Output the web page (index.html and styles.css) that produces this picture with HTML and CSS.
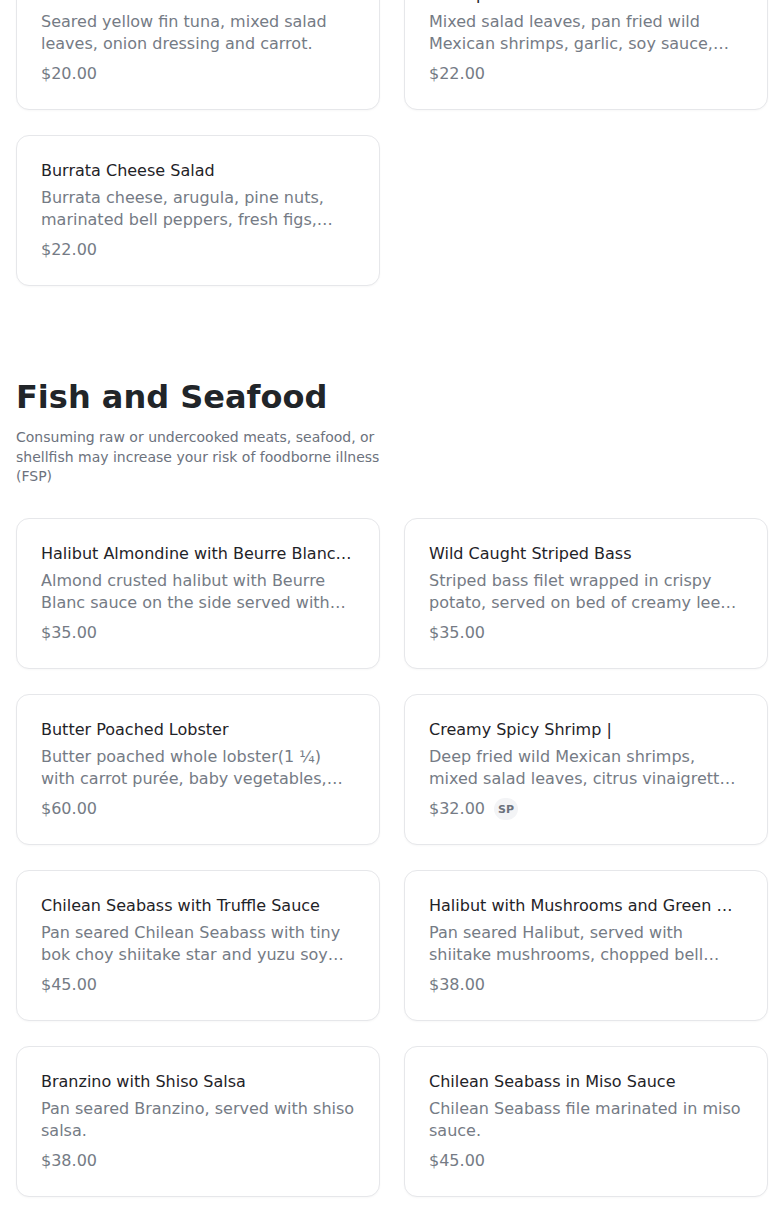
FILE: index.html
```html
<!DOCTYPE html>
<html lang="en">
<head>
<meta charset="utf-8">
<title>Menu</title>
<link rel="stylesheet" href="styles.css">
</head>
<body>
<main class="page">
  <section class="section section-salads">
    <div class="grid">
      <article class="card">
        <h3 class="card-title">Tuna Sashimi Salad</h3>
        <p class="card-desc">Seared yellow fin tuna, mixed salad leaves, onion dressing and carrot.</p>
        <div class="card-foot"><span class="price">$20.00</span></div>
      </article>
      <article class="card">
        <h3 class="card-title">Shrimp Salad</h3>
        <p class="card-desc">Mixed salad leaves, pan fried wild Mexican shrimps, garlic, soy sauce, lemon and olive oil dressing.</p>
        <div class="card-foot"><span class="price">$22.00</span></div>
      </article>
      <article class="card">
        <h3 class="card-title">Burrata Cheese Salad</h3>
        <p class="card-desc">Burrata cheese, arugula, pine nuts, marinated bell peppers, fresh figs, balsamic reduction.</p>
        <div class="card-foot"><span class="price">$22.00</span></div>
      </article>
    </div>
  </section>

  <section class="section section-fish">
    <header class="section-head">
      <h2 class="section-title">Fish and Seafood</h2>
      <p class="section-note">Consuming raw or undercooked meats, seafood, or shellfish may increase your risk of foodborne illness (FSP)</p>
    </header>
    <div class="grid">
      <article class="card">
        <h3 class="card-title">Halibut Almondine with Beurre Blanc Sauce</h3>
        <p class="card-desc">Almond crusted halibut with Beurre Blanc sauce on the side served with seasonal vegetables.</p>
        <div class="card-foot"><span class="price">$35.00</span></div>
      </article>
      <article class="card">
        <h3 class="card-title">Wild Caught Striped Bass</h3>
        <p class="card-desc">Striped bass filet wrapped in crispy potato, served on bed of creamy leek sauce.</p>
        <div class="card-foot"><span class="price">$35.00</span></div>
      </article>
      <article class="card">
        <h3 class="card-title">Butter Poached Lobster</h3>
        <p class="card-desc">Butter poached whole lobster(1 ¼) with carrot purée, baby vegetables, and lobster bisque.</p>
        <div class="card-foot"><span class="price">$60.00</span></div>
      </article>
      <article class="card">
        <h3 class="card-title">Creamy Spicy Shrimp |</h3>
        <p class="card-desc">Deep fried wild Mexican shrimps, mixed salad leaves, citrus vinaigrette and creamy spicy sauce.</p>
        <div class="card-foot"><span class="price">$32.00</span><span class="badge">SP</span></div>
      </article>
      <article class="card">
        <h3 class="card-title">Chilean Seabass with Truffle Sauce</h3>
        <p class="card-desc">Pan seared Chilean Seabass with tiny bok choy shiitake star and yuzu soy truffle sauce.</p>
        <div class="card-foot"><span class="price">$45.00</span></div>
      </article>
      <article class="card">
        <h3 class="card-title">Halibut with Mushrooms and Green Onion Sauce</h3>
        <p class="card-desc">Pan seared Halibut, served with shiitake mushrooms, chopped bell peppers and green onion sauce.</p>
        <div class="card-foot"><span class="price">$38.00</span></div>
      </article>
      <article class="card">
        <h3 class="card-title">Branzino with Shiso Salsa</h3>
        <p class="card-desc">Pan seared Branzino, served with shiso salsa.</p>
        <div class="card-foot"><span class="price">$38.00</span></div>
      </article>
      <article class="card">
        <h3 class="card-title">Chilean Seabass in Miso Sauce</h3>
        <p class="card-desc">Chilean Seabass file marinated in miso sauce.</p>
        <div class="card-foot"><span class="price">$45.00</span></div>
      </article>
      <article class="card">
        <h3 class="card-title">Grilled Salmon</h3>
        <p class="card-desc">Grilled salmon served with seasonal vegetables.</p>
        <div class="card-foot"><span class="price">$32.00</span></div>
      </article>
      <article class="card">
        <h3 class="card-title">Seafood Platter</h3>
        <p class="card-desc">Assorted seafood served with house sauce.</p>
        <div class="card-foot"><span class="price">$48.00</span></div>
      </article>
    </div>
  </section>
</main>
</body>
</html>
```

FILE: styles.css
```css
* {
  box-sizing: border-box;
}

html, body {
  margin: 0;
  padding: 0;
  background: #ffffff;
}

body {
  font-family: "DejaVu Sans", "Liberation Sans", sans-serif;
  color: #1f2328;
  overflow: hidden;
}

.page {
  padding: 0 16px;
  margin-top: -41px;
}

.grid {
  display: grid;
  grid-template-columns: 1fr 1fr;
  column-gap: 24px;
  row-gap: 25px;
}

.section-fish {
  margin-top: 91px;
}

.section-head {
  width: 364px;
  margin-bottom: 31.5px;
}

.section-title {
  margin: 0 0 11px;
  font-size: 32px;
  line-height: 40px;
  font-weight: 700;
  color: #212529;
}

.section-note {
  margin: 0;
  font-size: 14px;
  line-height: 19.5px;
  color: #6c727d;
}

.card {
  border: 1px solid #e6e7ea;
  border-radius: 13px;
  padding: 25px 24px 23px;
  height: 151px;
  background: #fff;
  box-shadow: 0 1px 2px rgba(0, 0, 0, 0.03);
  min-width: 0;
}

.card-title {
  margin: 0;
  font-size: 16px;
  line-height: 20px;
  font-weight: 400;
  color: #1f2328;
  white-space: nowrap;
  overflow: hidden;
  text-overflow: ellipsis;
}

.card-desc {
  margin: 6px 0 0;
  font-size: 16px;
  line-height: 22px;
  color: #757b85;
  display: -webkit-box;
  -webkit-line-clamp: 2;
  -webkit-box-orient: vertical;
  overflow: hidden;
  height: 44px;
}

.card-foot {
  margin-top: 7px;
  display: flex;
  align-items: center;
  gap: 9px;
  height: 24px;
}

.price {
  font-size: 16px;
  line-height: 24px;
  color: #757b85;
}

.badge {
  display: inline-flex;
  align-items: center;
  justify-content: center;
  width: 24px;
  height: 22px;
  border-radius: 11px;
  background: #f3f4f6;
  color: #6c727d;
  font-size: 11px;
  font-weight: 700;
}
```
